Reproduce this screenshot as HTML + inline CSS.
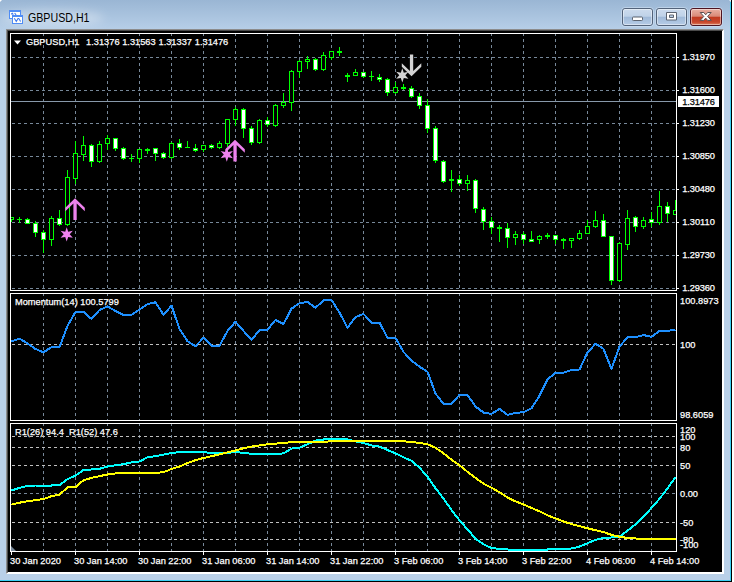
<!DOCTYPE html>
<html><head><meta charset="utf-8"><title>GBPUSD,H1</title>
<style>
html,body{margin:0;padding:0;background:#b4cbe4;overflow:hidden}
body{width:734px;height:582px;position:relative;font-family:"Liberation Sans",sans-serif}
svg{position:absolute;left:0;top:0;display:block}
text{font-family:"Liberation Sans",sans-serif}
.t{font-size:9.25px;fill:#fff;stroke:#fff;stroke-width:.25px}
.g{stroke:#778899;stroke-width:1;stroke-dasharray:3 3;shape-rendering:crispEdges;fill:none}
.w{stroke:#fff;stroke-width:1;shape-rendering:crispEdges;fill:none}
.c{shape-rendering:crispEdges}
</style></head><body>
<svg width="734" height="582" viewBox="0 0 734 582">
<defs>
<linearGradient id="tb" x1="0" y1="0" x2="0" y2="1"><stop offset="0" stop-color="#9ab6d4"/><stop offset="1" stop-color="#b7cfe8"/></linearGradient>
<linearGradient id="bt" x1="0" y1="0" x2="0" y2="1"><stop offset="0" stop-color="#cddcee"/><stop offset="0.46" stop-color="#bfd2e8"/><stop offset="0.5" stop-color="#9fb9d8"/><stop offset="1" stop-color="#b7cde7"/></linearGradient>
<linearGradient id="cl" x1="0" y1="0" x2="0" y2="1"><stop offset="0" stop-color="#eab3a6"/><stop offset="0.46" stop-color="#d98a78"/><stop offset="0.5" stop-color="#c03a20"/><stop offset="0.8" stop-color="#c8472c"/><stop offset="1" stop-color="#e08a68"/></linearGradient>
</defs>

<rect x="0" y="0" width="734" height="582" fill="#b9d0e8"/>
<rect x="0" y="0" width="734" height="30" fill="url(#tb)"/>
<rect x="732" y="0" width="2" height="582" fill="#fff"/>
<rect x="0" y="580" width="732" height="1" fill="#3cd0f4"/>
<rect x="730" y="2" width="1" height="579" fill="#3cd0f4"/>
<rect x="0" y="581" width="732" height="1" fill="#000"/>
<rect x="731" y="0" width="1" height="582" fill="#000"/>
<path d="M729 0 h2 v2 z" fill="#e8f4fc"/>
<path d="M0 0 h2 l-2 2 z" fill="#fff"/>
<rect x="6" y="29" width="718" height="545" fill="#fff"/>
<path d="M6 29 H724 L722 31 H8 V572 L6 574 Z" fill="#8c8c8c"/>
<path d="M7 30 H723 L722 31 H8 V572 L7 573 Z" fill="#4a4a4a"/>
<rect x="8" y="31" width="714" height="541" fill="#000"/>
<filter id="bl" x="-20%" y="-100%" width="140%" height="300%"><feGaussianBlur stdDeviation="5"/></filter>
<ellipse cx="52" cy="18" rx="52" ry="8" fill="#fff" opacity=".32" filter="url(#bl)"/>
<text x="28" y="22" font-size="12" fill="#000" textLength="61.5" lengthAdjust="spacingAndGlyphs">GBPUSD,H1</text>
<g class="c"><rect x="9.5" y="10.5" width="11" height="8" fill="#fffffa" stroke="#4f8cf5"/><rect x="9" y="10" width="12" height="2" fill="#4f8cf5"/><rect x="12.5" y="15.500" width="10" height="8" fill="#fffffa" stroke="#4f8cf5"/><rect x="12" y="15" width="11" height="2" fill="#4f8cf5"/></g>
<path d="M11.200 14.300 l1.100 -.900 l1 1.300 M14.600 13 l1.500 1.900" stroke="#3f78f0" fill="none" stroke-width="1.100"/>
<path d="M14.300 18.300 l2 3.200 l1.700 -3 h.800 l1.800 3" stroke="#3f78f0" fill="none" stroke-width="1.100"/>
<rect x="621.5" y="7.5" width="32" height="19" rx="3.5" ry="3.5" fill="none" stroke="#d6e4f4" stroke-opacity=".55"/>
<rect x="622.5" y="8.5" width="30" height="17" rx="2.5" ry="2.5" fill="url(#bt)" stroke="#53637a"/>
<rect x="623.5" y="9.5" width="28" height="15" rx="1.5" ry="1.5" fill="none" stroke="#fff" stroke-opacity=".45"/>
<rect x="655.5" y="7.5" width="32" height="19" rx="3.5" ry="3.5" fill="none" stroke="#d6e4f4" stroke-opacity=".55"/>
<rect x="656.5" y="8.5" width="30" height="17" rx="2.5" ry="2.5" fill="url(#bt)" stroke="#53637a"/>
<rect x="657.5" y="9.5" width="28" height="15" rx="1.5" ry="1.5" fill="none" stroke="#fff" stroke-opacity=".45"/>
<rect x="689.5" y="7.5" width="33" height="19" rx="3.5" ry="3.5" fill="none" stroke="#d6e4f4" stroke-opacity=".55"/>
<rect x="690.5" y="8.5" width="31" height="17" rx="2.5" ry="2.5" fill="url(#cl)" stroke="#4e1420"/>
<rect x="691.5" y="9.5" width="29" height="15" rx="1.5" ry="1.5" fill="none" stroke="#fff" stroke-opacity=".45"/>
<rect x="632.5" y="17" width="10" height="3.500" rx=".8" fill="#fff" stroke="#5c6470" stroke-width="1"/>
<path d="M666.5 12.500 h10 v7.500 h-10 z M669.5 15 v2.500 h4 v-2.500 z" fill="#fff" fill-rule="evenodd" stroke="#5c6470" stroke-width="1" stroke-linejoin="round"/>
<path d="M700.2 12.500 h3.600 l1.900 2.300 l1.900 -2.300 h3.600 l-3.600 3.900 l3.700 4 h-3.700 l-1.900 -2.300 l-1.900 2.300 h-3.700 l3.700 -4 z" fill="#fff" stroke="#5a5050" stroke-width="1" stroke-linejoin="round"/>
<line class="g" x1="43.5" y1="33" x2="43.5" y2="290"/>
<line class="g" x1="75.5" y1="33" x2="75.5" y2="290"/>
<line class="g" x1="107.5" y1="33" x2="107.5" y2="290"/>
<line class="g" x1="139.5" y1="33" x2="139.5" y2="290"/>
<line class="g" x1="171.5" y1="33" x2="171.5" y2="290"/>
<line class="g" x1="203.5" y1="33" x2="203.5" y2="290"/>
<line class="g" x1="235.5" y1="33" x2="235.5" y2="290"/>
<line class="g" x1="267.5" y1="33" x2="267.5" y2="290"/>
<line class="g" x1="299.5" y1="33" x2="299.5" y2="290"/>
<line class="g" x1="331.5" y1="33" x2="331.5" y2="290"/>
<line class="g" x1="363.5" y1="33" x2="363.5" y2="290"/>
<line class="g" x1="395.5" y1="33" x2="395.5" y2="290"/>
<line class="g" x1="427.5" y1="33" x2="427.5" y2="290"/>
<line class="g" x1="459.5" y1="33" x2="459.5" y2="290"/>
<line class="g" x1="491.5" y1="33" x2="491.5" y2="290"/>
<line class="g" x1="523.5" y1="33" x2="523.5" y2="290"/>
<line class="g" x1="555.5" y1="33" x2="555.5" y2="290"/>
<line class="g" x1="587.5" y1="33" x2="587.5" y2="290"/>
<line class="g" x1="619.5" y1="33" x2="619.5" y2="290"/>
<line class="g" x1="651.5" y1="33" x2="651.5" y2="290"/>
<line class="g" x1="12" y1="57.5" x2="676" y2="57.5"/>
<line class="g" x1="12" y1="90.5" x2="676" y2="90.5"/>
<line class="g" x1="12" y1="123.5" x2="676" y2="123.5"/>
<line class="g" x1="12" y1="156.5" x2="676" y2="156.5"/>
<line class="g" x1="12" y1="189.5" x2="676" y2="189.5"/>
<line class="g" x1="12" y1="222.5" x2="676" y2="222.5"/>
<line class="g" x1="12" y1="255.5" x2="676" y2="255.5"/>
<line class="g" x1="12" y1="288.5" x2="676" y2="288.5"/>
<line class="g" x1="43.5" y1="293" x2="43.5" y2="420"/>
<line class="g" x1="75.5" y1="293" x2="75.5" y2="420"/>
<line class="g" x1="107.5" y1="293" x2="107.5" y2="420"/>
<line class="g" x1="139.5" y1="293" x2="139.5" y2="420"/>
<line class="g" x1="171.5" y1="293" x2="171.5" y2="420"/>
<line class="g" x1="203.5" y1="293" x2="203.5" y2="420"/>
<line class="g" x1="235.5" y1="293" x2="235.5" y2="420"/>
<line class="g" x1="267.5" y1="293" x2="267.5" y2="420"/>
<line class="g" x1="299.5" y1="293" x2="299.5" y2="420"/>
<line class="g" x1="331.5" y1="293" x2="331.5" y2="420"/>
<line class="g" x1="363.5" y1="293" x2="363.5" y2="420"/>
<line class="g" x1="395.5" y1="293" x2="395.5" y2="420"/>
<line class="g" x1="427.5" y1="293" x2="427.5" y2="420"/>
<line class="g" x1="459.5" y1="293" x2="459.5" y2="420"/>
<line class="g" x1="491.5" y1="293" x2="491.5" y2="420"/>
<line class="g" x1="523.5" y1="293" x2="523.5" y2="420"/>
<line class="g" x1="555.5" y1="293" x2="555.5" y2="420"/>
<line class="g" x1="587.5" y1="293" x2="587.5" y2="420"/>
<line class="g" x1="619.5" y1="293" x2="619.5" y2="420"/>
<line class="g" x1="651.5" y1="293" x2="651.5" y2="420"/>
<line class="g" style="stroke:#c0c0c0" x1="12" y1="344.5" x2="676" y2="344.5"/>
<line class="g" x1="43.5" y1="423" x2="43.5" y2="551"/>
<line class="g" x1="75.5" y1="423" x2="75.5" y2="551"/>
<line class="g" x1="107.5" y1="423" x2="107.5" y2="551"/>
<line class="g" x1="139.5" y1="423" x2="139.5" y2="551"/>
<line class="g" x1="171.5" y1="423" x2="171.5" y2="551"/>
<line class="g" x1="203.5" y1="423" x2="203.5" y2="551"/>
<line class="g" x1="235.5" y1="423" x2="235.5" y2="551"/>
<line class="g" x1="267.5" y1="423" x2="267.5" y2="551"/>
<line class="g" x1="299.5" y1="423" x2="299.5" y2="551"/>
<line class="g" x1="331.5" y1="423" x2="331.5" y2="551"/>
<line class="g" x1="363.5" y1="423" x2="363.5" y2="551"/>
<line class="g" x1="395.5" y1="423" x2="395.5" y2="551"/>
<line class="g" x1="427.5" y1="423" x2="427.5" y2="551"/>
<line class="g" x1="459.5" y1="423" x2="459.5" y2="551"/>
<line class="g" x1="491.5" y1="423" x2="491.5" y2="551"/>
<line class="g" x1="523.5" y1="423" x2="523.5" y2="551"/>
<line class="g" x1="555.5" y1="423" x2="555.5" y2="551"/>
<line class="g" x1="587.5" y1="423" x2="587.5" y2="551"/>
<line class="g" x1="619.5" y1="423" x2="619.5" y2="551"/>
<line class="g" x1="651.5" y1="423" x2="651.5" y2="551"/>
<line class="g" style="stroke:#c0c0c0" x1="12" y1="436.5" x2="676" y2="436.5"/>
<line class="g" style="stroke:#c0c0c0" x1="12" y1="447.5" x2="676" y2="447.5"/>
<line class="g" style="stroke:#c0c0c0" x1="12" y1="465.5" x2="676" y2="465.5"/>
<line class="g" x1="12" y1="493.5" x2="676" y2="493.5"/>
<line class="g" style="stroke:#c0c0c0" x1="12" y1="522.5" x2="676" y2="522.5"/>
<line class="g" style="stroke:#c0c0c0" x1="12" y1="539.5" x2="676" y2="539.5"/>
<line x1="10" y1="101.5" x2="676" y2="101.5" stroke="#8899aa" class="c"/>
<clipPath id="cm"><rect x="11" y="34" width="665" height="256"/></clipPath><g clip-path="url(#cm)">
<rect class="c" x="11" y="217" width="1" height="5" fill="#00ff00"/>
<rect class="c" x="9" y="217" width="5" height="3" fill="#00ff00"/>
<rect class="c" x="10" y="218" width="3" height="1" fill="#000"/>
<rect class="c" x="19" y="217" width="1" height="6" fill="#00ff00"/>
<rect class="c" x="17" y="219" width="5" height="1" fill="#00ff00"/>
<rect class="c" x="27" y="218" width="1" height="6" fill="#00ff00"/>
<rect class="c" x="25" y="219" width="5" height="5" fill="#00ff00"/>
<rect class="c" x="26" y="220" width="3" height="3" fill="#fff"/>
<rect class="c" x="35" y="221" width="1" height="16" fill="#00ff00"/>
<rect class="c" x="33" y="223" width="5" height="10" fill="#00ff00"/>
<rect class="c" x="34" y="224" width="3" height="8" fill="#fff"/>
<rect class="c" x="43" y="230" width="1" height="23" fill="#00ff00"/>
<rect class="c" x="41" y="232" width="5" height="8" fill="#00ff00"/>
<rect class="c" x="42" y="233" width="3" height="6" fill="#fff"/>
<rect class="c" x="51" y="216" width="1" height="30" fill="#00ff00"/>
<rect class="c" x="49" y="218" width="5" height="22" fill="#00ff00"/>
<rect class="c" x="50" y="219" width="3" height="20" fill="#000"/>
<rect class="c" x="59" y="210" width="1" height="16" fill="#00ff00"/>
<rect class="c" x="57" y="218" width="5" height="7" fill="#00ff00"/>
<rect class="c" x="58" y="219" width="3" height="5" fill="#fff"/>
<rect class="c" x="67" y="170" width="1" height="56" fill="#00ff00"/>
<rect class="c" x="65" y="177" width="5" height="48" fill="#00ff00"/>
<rect class="c" x="66" y="178" width="3" height="46" fill="#000"/>
<rect class="c" x="75" y="141" width="1" height="43" fill="#00ff00"/>
<rect class="c" x="73" y="153" width="5" height="26" fill="#00ff00"/>
<rect class="c" x="74" y="154" width="3" height="24" fill="#000"/>
<rect class="c" x="83" y="136" width="1" height="25" fill="#00ff00"/>
<rect class="c" x="81" y="145" width="5" height="10" fill="#00ff00"/>
<rect class="c" x="82" y="146" width="3" height="8" fill="#000"/>
<rect class="c" x="91" y="144" width="1" height="23" fill="#00ff00"/>
<rect class="c" x="89" y="145" width="5" height="17" fill="#00ff00"/>
<rect class="c" x="90" y="146" width="3" height="15" fill="#fff"/>
<rect class="c" x="99" y="141" width="1" height="22" fill="#00ff00"/>
<rect class="c" x="97" y="144" width="5" height="18" fill="#00ff00"/>
<rect class="c" x="98" y="145" width="3" height="16" fill="#000"/>
<rect class="c" x="107" y="135" width="1" height="15" fill="#00ff00"/>
<rect class="c" x="105" y="138" width="5" height="6" fill="#00ff00"/>
<rect class="c" x="106" y="139" width="3" height="4" fill="#000"/>
<rect class="c" x="115" y="138" width="1" height="13" fill="#00ff00"/>
<rect class="c" x="113" y="138" width="5" height="11" fill="#00ff00"/>
<rect class="c" x="114" y="139" width="3" height="9" fill="#fff"/>
<rect class="c" x="123" y="147" width="1" height="13" fill="#00ff00"/>
<rect class="c" x="121" y="148" width="5" height="11" fill="#00ff00"/>
<rect class="c" x="122" y="149" width="3" height="9" fill="#fff"/>
<rect class="c" x="131" y="154" width="1" height="8" fill="#00ff00"/>
<rect class="c" x="129" y="158" width="5" height="1" fill="#00ff00"/>
<rect class="c" x="139" y="149" width="1" height="14" fill="#00ff00"/>
<rect class="c" x="137" y="149" width="5" height="10" fill="#00ff00"/>
<rect class="c" x="138" y="150" width="3" height="8" fill="#000"/>
<rect class="c" x="147" y="148" width="1" height="6" fill="#00ff00"/>
<rect class="c" x="145" y="149" width="5" height="2" fill="#00ff00"/>
<rect class="c" x="155" y="148" width="1" height="13" fill="#00ff00"/>
<rect class="c" x="153" y="148" width="5" height="6" fill="#00ff00"/>
<rect class="c" x="154" y="149" width="3" height="4" fill="#fff"/>
<rect class="c" x="163" y="152" width="1" height="7" fill="#00ff00"/>
<rect class="c" x="161" y="153" width="5" height="5" fill="#00ff00"/>
<rect class="c" x="162" y="154" width="3" height="3" fill="#fff"/>
<rect class="c" x="171" y="142" width="1" height="17" fill="#00ff00"/>
<rect class="c" x="169" y="143" width="5" height="15" fill="#00ff00"/>
<rect class="c" x="170" y="144" width="3" height="13" fill="#000"/>
<rect class="c" x="179" y="139" width="1" height="11" fill="#00ff00"/>
<rect class="c" x="177" y="143" width="5" height="5" fill="#00ff00"/>
<rect class="c" x="178" y="144" width="3" height="3" fill="#fff"/>
<rect class="c" x="187" y="141" width="1" height="7" fill="#00ff00"/>
<rect class="c" x="185" y="147" width="5" height="1" fill="#00ff00"/>
<rect class="c" x="195" y="144" width="1" height="8" fill="#00ff00"/>
<rect class="c" x="193" y="148" width="5" height="3" fill="#00ff00"/>
<rect class="c" x="194" y="149" width="3" height="1" fill="#fff"/>
<rect class="c" x="203" y="145" width="1" height="7" fill="#00ff00"/>
<rect class="c" x="201" y="145" width="5" height="5" fill="#00ff00"/>
<rect class="c" x="202" y="146" width="3" height="3" fill="#000"/>
<rect class="c" x="211" y="144" width="1" height="5" fill="#00ff00"/>
<rect class="c" x="209" y="145" width="5" height="3" fill="#00ff00"/>
<rect class="c" x="210" y="146" width="3" height="1" fill="#fff"/>
<rect class="c" x="219" y="141" width="1" height="8" fill="#00ff00"/>
<rect class="c" x="217" y="143" width="5" height="5" fill="#00ff00"/>
<rect class="c" x="218" y="144" width="3" height="3" fill="#000"/>
<rect class="c" x="227" y="119" width="1" height="28" fill="#00ff00"/>
<rect class="c" x="225" y="119" width="5" height="25" fill="#00ff00"/>
<rect class="c" x="226" y="120" width="3" height="23" fill="#000"/>
<rect class="c" x="235" y="107" width="1" height="19" fill="#00ff00"/>
<rect class="c" x="233" y="109" width="5" height="11" fill="#00ff00"/>
<rect class="c" x="234" y="110" width="3" height="9" fill="#000"/>
<rect class="c" x="243" y="108" width="1" height="30" fill="#00ff00"/>
<rect class="c" x="241" y="109" width="5" height="20" fill="#00ff00"/>
<rect class="c" x="242" y="110" width="3" height="18" fill="#fff"/>
<rect class="c" x="251" y="126" width="1" height="19" fill="#00ff00"/>
<rect class="c" x="249" y="128" width="5" height="15" fill="#00ff00"/>
<rect class="c" x="250" y="129" width="3" height="13" fill="#fff"/>
<rect class="c" x="259" y="119" width="1" height="25" fill="#00ff00"/>
<rect class="c" x="257" y="120" width="5" height="23" fill="#00ff00"/>
<rect class="c" x="258" y="121" width="3" height="21" fill="#000"/>
<rect class="c" x="267" y="117" width="1" height="10" fill="#00ff00"/>
<rect class="c" x="265" y="120" width="5" height="5" fill="#00ff00"/>
<rect class="c" x="266" y="121" width="3" height="3" fill="#fff"/>
<rect class="c" x="275" y="104" width="1" height="23" fill="#00ff00"/>
<rect class="c" x="273" y="105" width="5" height="21" fill="#00ff00"/>
<rect class="c" x="274" y="106" width="3" height="19" fill="#000"/>
<rect class="c" x="283" y="93" width="1" height="15" fill="#00ff00"/>
<rect class="c" x="281" y="102" width="5" height="4" fill="#00ff00"/>
<rect class="c" x="282" y="103" width="3" height="2" fill="#000"/>
<rect class="c" x="291" y="70" width="1" height="41" fill="#00ff00"/>
<rect class="c" x="289" y="71" width="5" height="32" fill="#00ff00"/>
<rect class="c" x="290" y="72" width="3" height="30" fill="#000"/>
<rect class="c" x="299" y="60" width="1" height="18" fill="#00ff00"/>
<rect class="c" x="297" y="61" width="5" height="11" fill="#00ff00"/>
<rect class="c" x="298" y="62" width="3" height="9" fill="#000"/>
<rect class="c" x="307" y="56" width="1" height="13" fill="#00ff00"/>
<rect class="c" x="305" y="59" width="5" height="3" fill="#00ff00"/>
<rect class="c" x="306" y="60" width="3" height="1" fill="#000"/>
<rect class="c" x="315" y="58" width="1" height="13" fill="#00ff00"/>
<rect class="c" x="313" y="59" width="5" height="11" fill="#00ff00"/>
<rect class="c" x="314" y="60" width="3" height="9" fill="#fff"/>
<rect class="c" x="323" y="52" width="1" height="19" fill="#00ff00"/>
<rect class="c" x="321" y="55" width="5" height="15" fill="#00ff00"/>
<rect class="c" x="322" y="56" width="3" height="13" fill="#000"/>
<rect class="c" x="331" y="51" width="1" height="9" fill="#00ff00"/>
<rect class="c" x="329" y="51" width="5" height="7" fill="#00ff00"/>
<rect class="c" x="330" y="52" width="3" height="5" fill="#000"/>
<rect class="c" x="339" y="47" width="1" height="9" fill="#00ff00"/>
<rect class="c" x="337" y="51" width="5" height="2" fill="#00ff00"/>
<rect class="c" x="347" y="73" width="1" height="9" fill="#00ff00"/>
<rect class="c" x="345" y="75" width="5" height="2" fill="#00ff00"/>
<rect class="c" x="355" y="69" width="1" height="7" fill="#00ff00"/>
<rect class="c" x="353" y="72" width="5" height="4" fill="#00ff00"/>
<rect class="c" x="354" y="73" width="3" height="2" fill="#000"/>
<rect class="c" x="363" y="72" width="1" height="6" fill="#00ff00"/>
<rect class="c" x="361" y="72" width="5" height="5" fill="#00ff00"/>
<rect class="c" x="362" y="73" width="3" height="3" fill="#fff"/>
<rect class="c" x="371" y="71" width="1" height="10" fill="#00ff00"/>
<rect class="c" x="369" y="76" width="5" height="1" fill="#00ff00"/>
<rect class="c" x="379" y="74" width="1" height="8" fill="#00ff00"/>
<rect class="c" x="377" y="77" width="5" height="3" fill="#00ff00"/>
<rect class="c" x="378" y="78" width="3" height="1" fill="#fff"/>
<rect class="c" x="387" y="78" width="1" height="18" fill="#00ff00"/>
<rect class="c" x="385" y="79" width="5" height="14" fill="#00ff00"/>
<rect class="c" x="386" y="80" width="3" height="12" fill="#fff"/>
<rect class="c" x="395" y="82" width="1" height="12" fill="#00ff00"/>
<rect class="c" x="393" y="87" width="5" height="6" fill="#00ff00"/>
<rect class="c" x="394" y="88" width="3" height="4" fill="#000"/>
<rect class="c" x="403" y="84" width="1" height="6" fill="#00ff00"/>
<rect class="c" x="401" y="87" width="5" height="2" fill="#00ff00"/>
<rect class="c" x="411" y="86" width="1" height="12" fill="#00ff00"/>
<rect class="c" x="409" y="88" width="5" height="9" fill="#00ff00"/>
<rect class="c" x="410" y="89" width="3" height="7" fill="#fff"/>
<rect class="c" x="419" y="93" width="1" height="16" fill="#00ff00"/>
<rect class="c" x="417" y="96" width="5" height="10" fill="#00ff00"/>
<rect class="c" x="418" y="97" width="3" height="8" fill="#fff"/>
<rect class="c" x="427" y="99" width="1" height="34" fill="#00ff00"/>
<rect class="c" x="425" y="105" width="5" height="24" fill="#00ff00"/>
<rect class="c" x="426" y="106" width="3" height="22" fill="#fff"/>
<rect class="c" x="435" y="126" width="1" height="37" fill="#00ff00"/>
<rect class="c" x="433" y="128" width="5" height="33" fill="#00ff00"/>
<rect class="c" x="434" y="129" width="3" height="31" fill="#fff"/>
<rect class="c" x="443" y="160" width="1" height="23" fill="#00ff00"/>
<rect class="c" x="441" y="161" width="5" height="21" fill="#00ff00"/>
<rect class="c" x="442" y="162" width="3" height="19" fill="#fff"/>
<rect class="c" x="451" y="170" width="1" height="22" fill="#00ff00"/>
<rect class="c" x="449" y="179" width="5" height="2" fill="#00ff00"/>
<rect class="c" x="459" y="175" width="1" height="11" fill="#00ff00"/>
<rect class="c" x="457" y="179" width="5" height="5" fill="#00ff00"/>
<rect class="c" x="458" y="180" width="3" height="3" fill="#fff"/>
<rect class="c" x="467" y="175" width="1" height="16" fill="#00ff00"/>
<rect class="c" x="465" y="180" width="5" height="4" fill="#00ff00"/>
<rect class="c" x="466" y="181" width="3" height="2" fill="#000"/>
<rect class="c" x="475" y="179" width="1" height="34" fill="#00ff00"/>
<rect class="c" x="473" y="180" width="5" height="29" fill="#00ff00"/>
<rect class="c" x="474" y="181" width="3" height="27" fill="#fff"/>
<rect class="c" x="483" y="207" width="1" height="23" fill="#00ff00"/>
<rect class="c" x="481" y="209" width="5" height="13" fill="#00ff00"/>
<rect class="c" x="482" y="210" width="3" height="11" fill="#fff"/>
<rect class="c" x="491" y="217" width="1" height="17" fill="#00ff00"/>
<rect class="c" x="489" y="221" width="5" height="7" fill="#00ff00"/>
<rect class="c" x="490" y="222" width="3" height="5" fill="#fff"/>
<rect class="c" x="499" y="225" width="1" height="17" fill="#00ff00"/>
<rect class="c" x="497" y="227" width="5" height="2" fill="#00ff00"/>
<rect class="c" x="507" y="223" width="1" height="25" fill="#00ff00"/>
<rect class="c" x="505" y="228" width="5" height="10" fill="#00ff00"/>
<rect class="c" x="506" y="229" width="3" height="8" fill="#fff"/>
<rect class="c" x="515" y="231" width="1" height="14" fill="#00ff00"/>
<rect class="c" x="513" y="234" width="5" height="4" fill="#00ff00"/>
<rect class="c" x="514" y="235" width="3" height="2" fill="#000"/>
<rect class="c" x="523" y="232" width="1" height="12" fill="#00ff00"/>
<rect class="c" x="521" y="234" width="5" height="6" fill="#00ff00"/>
<rect class="c" x="522" y="235" width="3" height="4" fill="#fff"/>
<rect class="c" x="531" y="231" width="1" height="11" fill="#00ff00"/>
<rect class="c" x="529" y="239" width="5" height="3" fill="#00ff00"/>
<rect class="c" x="530" y="240" width="3" height="1" fill="#fff"/>
<rect class="c" x="539" y="235" width="1" height="9" fill="#00ff00"/>
<rect class="c" x="537" y="236" width="5" height="4" fill="#00ff00"/>
<rect class="c" x="538" y="237" width="3" height="2" fill="#000"/>
<rect class="c" x="547" y="233" width="1" height="6" fill="#00ff00"/>
<rect class="c" x="545" y="235" width="5" height="2" fill="#00ff00"/>
<rect class="c" x="555" y="235" width="1" height="9" fill="#00ff00"/>
<rect class="c" x="553" y="235" width="5" height="5" fill="#00ff00"/>
<rect class="c" x="554" y="236" width="3" height="3" fill="#fff"/>
<rect class="c" x="563" y="238" width="1" height="11" fill="#00ff00"/>
<rect class="c" x="561" y="239" width="5" height="2" fill="#00ff00"/>
<rect class="c" x="571" y="238" width="1" height="10" fill="#00ff00"/>
<rect class="c" x="569" y="238" width="5" height="3" fill="#00ff00"/>
<rect class="c" x="570" y="239" width="3" height="1" fill="#000"/>
<rect class="c" x="579" y="230" width="1" height="10" fill="#00ff00"/>
<rect class="c" x="577" y="233" width="5" height="6" fill="#00ff00"/>
<rect class="c" x="578" y="234" width="3" height="4" fill="#000"/>
<rect class="c" x="587" y="220" width="1" height="14" fill="#00ff00"/>
<rect class="c" x="585" y="226" width="5" height="8" fill="#00ff00"/>
<rect class="c" x="586" y="227" width="3" height="6" fill="#000"/>
<rect class="c" x="595" y="211" width="1" height="17" fill="#00ff00"/>
<rect class="c" x="593" y="220" width="5" height="7" fill="#00ff00"/>
<rect class="c" x="594" y="221" width="3" height="5" fill="#000"/>
<rect class="c" x="603" y="214" width="1" height="23" fill="#00ff00"/>
<rect class="c" x="601" y="220" width="5" height="17" fill="#00ff00"/>
<rect class="c" x="602" y="221" width="3" height="15" fill="#fff"/>
<rect class="c" x="611" y="236" width="1" height="49" fill="#00ff00"/>
<rect class="c" x="609" y="236" width="5" height="45" fill="#00ff00"/>
<rect class="c" x="610" y="237" width="3" height="43" fill="#fff"/>
<rect class="c" x="619" y="242" width="1" height="40" fill="#00ff00"/>
<rect class="c" x="617" y="243" width="5" height="38" fill="#00ff00"/>
<rect class="c" x="618" y="244" width="3" height="36" fill="#000"/>
<rect class="c" x="627" y="210" width="1" height="40" fill="#00ff00"/>
<rect class="c" x="625" y="218" width="5" height="27" fill="#00ff00"/>
<rect class="c" x="626" y="219" width="3" height="25" fill="#000"/>
<rect class="c" x="635" y="216" width="1" height="16" fill="#00ff00"/>
<rect class="c" x="633" y="217" width="5" height="10" fill="#00ff00"/>
<rect class="c" x="634" y="218" width="3" height="8" fill="#fff"/>
<rect class="c" x="643" y="217" width="1" height="12" fill="#00ff00"/>
<rect class="c" x="641" y="220" width="5" height="7" fill="#00ff00"/>
<rect class="c" x="642" y="221" width="3" height="5" fill="#000"/>
<rect class="c" x="651" y="212" width="1" height="15" fill="#00ff00"/>
<rect class="c" x="649" y="219" width="5" height="4" fill="#00ff00"/>
<rect class="c" x="650" y="220" width="3" height="2" fill="#fff"/>
<rect class="c" x="659" y="191" width="1" height="34" fill="#00ff00"/>
<rect class="c" x="657" y="206" width="5" height="17" fill="#00ff00"/>
<rect class="c" x="658" y="207" width="3" height="15" fill="#000"/>
<rect class="c" x="667" y="202" width="1" height="20" fill="#00ff00"/>
<rect class="c" x="665" y="206" width="5" height="8" fill="#00ff00"/>
<rect class="c" x="666" y="207" width="3" height="6" fill="#fff"/>
<rect class="c" x="675" y="200" width="1" height="15" fill="#00ff00"/>
<rect class="c" x="673" y="210" width="5" height="5" fill="#00ff00"/>
<rect class="c" x="674" y="211" width="3" height="3" fill="#000"/>
<polygon points="66.70,227.20 68.20,231.70 72.85,230.75 69.70,234.30 72.85,237.85 68.20,236.90 66.70,241.40 65.20,236.90 60.55,237.85 63.70,234.30 60.55,230.75 65.20,231.70" fill="#ee82ee"/><path fill="#ee82ee" d="M75 198.3 L84.8 207.7 V211.3 L76.7 203.6 V220.1 H73.4 V203.6 L65.3 211.3 V207.7 Z"/><polygon points="226.80,147.50 228.30,152.00 232.95,151.05 229.80,154.60 232.95,158.15 228.30,157.20 226.80,161.70 225.30,157.20 220.65,158.15 223.80,154.60 220.65,151.05 225.30,152.00" fill="#ee82ee"/><path fill="#ee82ee" d="M235 139.8 L244.8 149.2 V152.8 L236.7 145.1 V161.6 H233.4 V145.1 L225.3 152.8 V149.2 Z"/><polygon points="402.30,68.20 403.80,72.70 408.45,71.75 405.30,75.30 408.45,78.85 403.80,77.90 402.30,82.40 400.80,77.90 396.15,78.85 399.30,75.30 396.15,71.75 400.80,72.70" fill="#d3d3d3"/><path fill="#d3d3d3" d="M411.5 76.2 L421.3 66.8 V63.2 L413.2 70.9 V54.4 H409.9 V70.9 L401.8 63.2 V66.8 Z"/>
</g>
<polyline points="11.5,341.5 19.5,338.6 27.5,343.4 35.5,349 43.5,352.3 51.5,347.1 59.5,347.1 67.5,326 75.5,311.9 83.5,311.9 91.5,319 99.5,310 107.5,306.5 115.5,311 123.5,314.9 131.5,314.9 139.5,309.5 147.5,304.1 155.5,302.3 163.5,314.9 171.5,305.6 179.5,329.1 187.5,341.2 195.5,346.2 203.5,337.8 211.5,345.8 219.5,345.8 227.5,331 235.5,321.7 243.5,331 251.5,339.9 259.5,330 267.5,329.7 275.5,319.9 283.5,324.1 291.5,308.7 299.5,303.2 307.5,301.9 315.5,307.8 323.5,300.4 331.5,300 339.5,312.5 347.5,327.8 355.5,317.1 363.5,313.9 371.5,322.6 379.5,322.6 387.5,337.8 395.5,337.9 403.5,351.9 411.5,360.6 419.5,366.7 427.5,371.7 435.5,393.6 443.5,403.7 451.5,403.7 459.5,394.9 467.5,394.9 475.5,406.5 483.5,412.5 491.5,413.9 499.5,408.9 507.5,414.9 515.5,413 523.5,412.1 531.5,408.3 539.5,395.7 547.5,379.3 555.5,372.8 563.5,372.8 571.5,369.9 579.5,369.5 587.5,352.5 595.5,343.8 603.5,348.8 611.5,368.8 619.5,346.6 627.5,337.2 635.5,337.2 643.5,335.1 651.5,336.8 659.5,330.9 667.5,330.9 675.5,329.8" fill="none" stroke="#1e90ff" stroke-width="2" stroke-linejoin="round" shape-rendering="crispEdges"/>
<polyline points="11.5,490.5 19.5,487.8 27.5,485.9 35.5,485.5 43.5,485.5 51.5,485.5 59.5,485.3 67.5,479.1 75.5,475.6 83.5,469.9 91.5,469.5 99.5,468.8 107.5,466.5 115.5,465.3 123.5,464.2 131.5,462.4 139.5,461.5 147.5,457.3 155.5,456.2 163.5,454.6 171.5,453.1 179.5,452.1 187.5,452.1 195.5,452.1 203.5,452.3 211.5,452.8 219.5,452.8 227.5,452.8 235.5,452.1 243.5,452.8 251.5,453.9 259.5,453.9 267.5,453.9 275.5,453.9 283.5,453.4 291.5,448.6 299.5,447.7 307.5,444.3 315.5,440.6 323.5,439.5 331.5,438.8 339.5,439 347.5,439.5 355.5,441.3 363.5,443.1 371.5,445.4 379.5,446.6 387.5,450 395.5,453.4 403.5,457.3 411.5,460.8 419.5,467.6 427.5,476.8 435.5,488.2 443.5,498.5 451.5,510 459.5,520.3 467.5,529.4 475.5,538.6 483.5,544.3 491.5,548 499.5,549 507.5,549.5 515.5,549.5 523.5,549.5 531.5,549.5 539.5,549.5 547.5,549.5 555.5,549.3 563.5,549 571.5,548.5 579.5,546.6 587.5,543.2 595.5,539.8 603.5,538 611.5,537.5 619.5,536.7 627.5,530.7 635.5,524.4 643.5,516.6 651.5,507.9 659.5,498.8 667.5,488.3 675.5,477.1" fill="none" stroke="#00ffff" stroke-width="2" stroke-linejoin="round" shape-rendering="crispEdges"/>
<polyline points="11.5,504.7 19.5,502.7 27.5,501.3 35.5,500.1 43.5,499 51.5,496.2 59.5,494.6 67.5,487.5 75.5,487.1 83.5,480.2 91.5,477.9 99.5,476.1 107.5,474.5 115.5,473.4 123.5,472.9 131.5,472.9 139.5,472.9 147.5,472.9 155.5,472.9 163.5,472.2 171.5,469 179.5,466.5 187.5,463.1 195.5,460.1 203.5,458 211.5,456.2 219.5,454.4 227.5,452.3 235.5,450.5 243.5,448.2 251.5,446.6 259.5,445.4 267.5,444.3 275.5,443.6 283.5,443.1 291.5,442 299.5,441.8 307.5,441.8 315.5,441.8 323.5,441.8 331.5,441.3 339.5,440.9 347.5,440.6 355.5,440.6 363.5,440.6 371.5,440.6 379.5,440.6 387.5,440.6 395.5,440.9 403.5,441.3 411.5,442 419.5,442.9 427.5,444.3 435.5,447.7 443.5,453.4 451.5,459.6 459.5,465.3 467.5,471.8 475.5,477.9 483.5,483.7 491.5,487.8 499.5,492.2 507.5,497.5 515.5,501.4 523.5,504.5 531.5,507.9 539.5,511.3 547.5,515.3 555.5,518.4 563.5,521.5 571.5,524.1 579.5,526.2 587.5,528.3 595.5,530.2 603.5,532 611.5,534.9 619.5,536.7 627.5,538 635.5,538.5 643.5,538.8 651.5,538.8 659.5,538.8 667.5,538.8 675.5,538.8" fill="none" stroke="#ffff00" stroke-width="2" stroke-linejoin="round" shape-rendering="crispEdges"/>
<rect x="8" y="291" width="669" height="2" fill="#000"/><rect x="8" y="421" width="669" height="2" fill="#000"/>
<rect x="677" y="31" width="45" height="541" fill="#000"/>
<path class="w" d="M10.5 290.5 V33.5 H676.5 V290.5 H10.5"/>
<path class="w" d="M10.5 420.5 V293.5 H676.5 V420.5 H10.5"/>
<path class="w" d="M10.5 551.5 V423.5 H676.5 V551.5 H10.5"/>
<path d="M11 546 l5 5 l-5 0 z" fill="#778899"/>
<line class="w" x1="677" y1="57.5" x2="679" y2="57.5"/>
<text class="t" x="682.2" y="60.2" fill="#fff" textLength="32.6">1.31970</text>
<line class="w" x1="677" y1="90.5" x2="679" y2="90.5"/>
<text class="t" x="682.2" y="93.2" fill="#fff" textLength="32.6">1.31600</text>
<line class="w" x1="677" y1="123.5" x2="679" y2="123.5"/>
<text class="t" x="682.2" y="126.2" fill="#fff" textLength="32.6">1.31230</text>
<line class="w" x1="677" y1="156.5" x2="679" y2="156.5"/>
<text class="t" x="682.2" y="159.2" fill="#fff" textLength="32.6">1.30850</text>
<line class="w" x1="677" y1="189.5" x2="679" y2="189.5"/>
<text class="t" x="682.2" y="192.2" fill="#fff" textLength="32.6">1.30480</text>
<line class="w" x1="677" y1="222.5" x2="679" y2="222.5"/>
<text class="t" x="682.2" y="225.2" fill="#fff" textLength="32.6">1.30110</text>
<line class="w" x1="677" y1="255.5" x2="679" y2="255.5"/>
<text class="t" x="682.2" y="258.2" fill="#fff" textLength="32.6">1.29730</text>
<line class="w" x1="677" y1="288.5" x2="679" y2="288.5"/>
<text class="t" x="682.2" y="291.2" fill="#fff" textLength="32.6">1.29360</text>
<rect x="678" y="96" width="41" height="11" fill="#fff"/>
<text class="t" x="682.2" y="105" textLength="32.6" style="fill:#000;stroke:#000">1.31476</text>
<text class="t" x="680" y="303.5" fill="#fff">100.8973</text>
<text class="t" x="680" y="347.5" fill="#fff">100</text>
<text class="t" x="680" y="417.5" fill="#fff">98.6059</text>
<text class="t" x="680" y="433.0" fill="#fff">120</text>
<text class="t" x="680" y="439.5" fill="#fff">100</text>
<text class="t" x="680" y="450.5" fill="#fff">80</text>
<text class="t" x="680" y="468.5" fill="#fff">50</text>
<text class="t" x="680" y="496.5" fill="#fff">0.00</text>
<text class="t" x="680" y="525.5" fill="#fff">-50</text>
<text class="t" x="680" y="543.0" fill="#fff">-80</text>
<text class="t" x="680" y="547.5" fill="#fff">-100</text>
<line class="w" x1="11.5" y1="551" x2="11.5" y2="555"/>
<text class="t" x="10" y="563.5" fill="#fff">30 Jan 2020</text>
<line class="w" x1="75.5" y1="551" x2="75.5" y2="555"/>
<text class="t" x="74" y="563.5" fill="#fff">30 Jan 14:00</text>
<line class="w" x1="139.5" y1="551" x2="139.5" y2="555"/>
<text class="t" x="138" y="563.5" fill="#fff">30 Jan 22:00</text>
<line class="w" x1="203.5" y1="551" x2="203.5" y2="555"/>
<text class="t" x="202" y="563.5" fill="#fff">31 Jan 06:00</text>
<line class="w" x1="267.5" y1="551" x2="267.5" y2="555"/>
<text class="t" x="266" y="563.5" fill="#fff">31 Jan 14:00</text>
<line class="w" x1="331.5" y1="551" x2="331.5" y2="555"/>
<text class="t" x="330" y="563.5" fill="#fff">31 Jan 22:00</text>
<line class="w" x1="395.5" y1="551" x2="395.5" y2="555"/>
<text class="t" x="394" y="563.5" fill="#fff">3 Feb 06:00</text>
<line class="w" x1="459.5" y1="551" x2="459.5" y2="555"/>
<text class="t" x="458" y="563.5" fill="#fff">3 Feb 14:00</text>
<line class="w" x1="523.5" y1="551" x2="523.5" y2="555"/>
<text class="t" x="522" y="563.5" fill="#fff">3 Feb 22:00</text>
<line class="w" x1="587.5" y1="551" x2="587.5" y2="555"/>
<text class="t" x="586" y="563.5" fill="#fff">4 Feb 06:00</text>
<line class="w" x1="651.5" y1="551" x2="651.5" y2="555"/>
<text class="t" x="650" y="563.5" fill="#fff">4 Feb 14:00</text>
<path d="M14 40.5 h7 l-3.500 4 z" fill="#fff"/>
<text class="t" x="26" y="44.5" fill="#fff">GBPUSD,H1<tspan x="86.1">1.31376</tspan><tspan x="122.2">1.31563</tspan><tspan x="158.5">1.31337</tspan><tspan x="194.8">1.31476</tspan></text>
<text class="t" x="15" y="304.5" fill="#fff">Momentum(14) 100.5799</text>
<text class="t" x="15" y="434.5" fill="#fff">R1(26) 94.4&#160; R1(52) 47.6</text>
</svg></body></html>
